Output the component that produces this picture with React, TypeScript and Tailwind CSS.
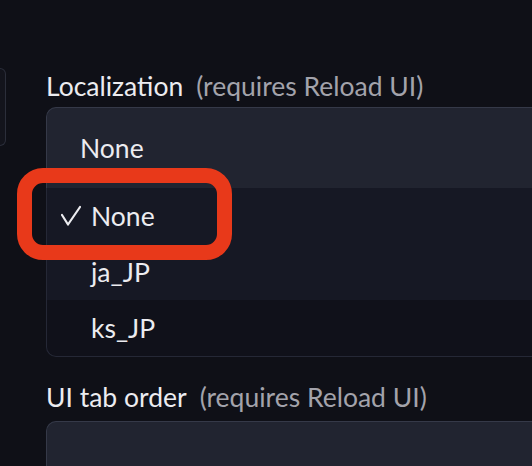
import React from 'react';

const font = { fontFamily: 'Lato, "Noto Sans", sans-serif' };

const options = ['None', 'ja_JP', 'ks_JP'];

const Check: React.FC = () => (
  <svg width="20" height="22" viewBox="0 0 20 22" className="absolute left-[14px] top-[16px]">
    <polyline points="1,11 7,20.5 19,3" fill="none" stroke="#ececf0" strokeWidth="2.2" strokeLinecap="round" strokeLinejoin="round" />
  </svg>
);

const App: React.FC = () => {
  const selected = 'None';
  const hovered = 'ja_JP';

  return (
    <div className="relative w-[532px] h-[466px] overflow-hidden bg-[#0f1017]" style={font}>
      <div className="flex pt-[68px]">
        {/* previous column's block, mostly off screen */}
        <div className="w-[6px] h-[78px] shrink-0 rounded-r-lg border-y border-r border-[#2b2e3a] bg-[#13141c]" />

        <div className="ml-[40px] w-[620px] shrink-0 pt-[3px]">
          {/* Localization */}
          <label className="flex items-baseline text-[26.5px] leading-[31px]">
            <span className="text-[#ececf0]">Localization</span>
            <span className="ml-[13px] text-[#a3a3ab]">(requires Reload UI)</span>
          </label>

          <div className="relative mt-[5px]">
            <div className="h-[81px] flex items-center pl-[33px] rounded-t-[10px] border-t border-l border-[#353948] bg-[#212430] text-[26.5px] leading-[31px] text-[#ececf0]">
              None
            </div>

            {/* open options list */}
            <ul className="absolute left-0 top-full w-full z-10 rounded-bl-[10px] border-l border-b border-[#252836] bg-[#10111a] text-[26.5px] leading-[31px] text-[#ececf0]">
              {options.map((opt) => (
                <li
                  key={opt}
                  className={
                    'relative h-[56px] flex items-center pl-[44px] ' +
                    (opt === selected || opt === hovered ? 'bg-[#161824]' : '')
                  }
                >
                  {opt === selected && <Check />}
                  {opt}
                </li>
              ))}
            </ul>
          </div>

          {/* UI tab order */}
          <label className="mt-[194px] flex items-baseline text-[26.5px] leading-[31px]">
            <span className="text-[#ececf0]">UI tab order</span>
            <span className="ml-[13px] text-[#a3a3ab]">(requires Reload UI)</span>
          </label>
          <div className="mt-[8px] h-[81px] rounded-t-[10px] border-t border-l border-[#353948] bg-[#212430]" />
        </div>
      </div>

      {/* annotation around the selected option */}
      <div className="absolute left-[17px] top-[168px] w-[215px] h-[92px] z-20 rounded-[26px] border-[15px] border-[#e8391a]" />
    </div>
  );
};

export default App;
